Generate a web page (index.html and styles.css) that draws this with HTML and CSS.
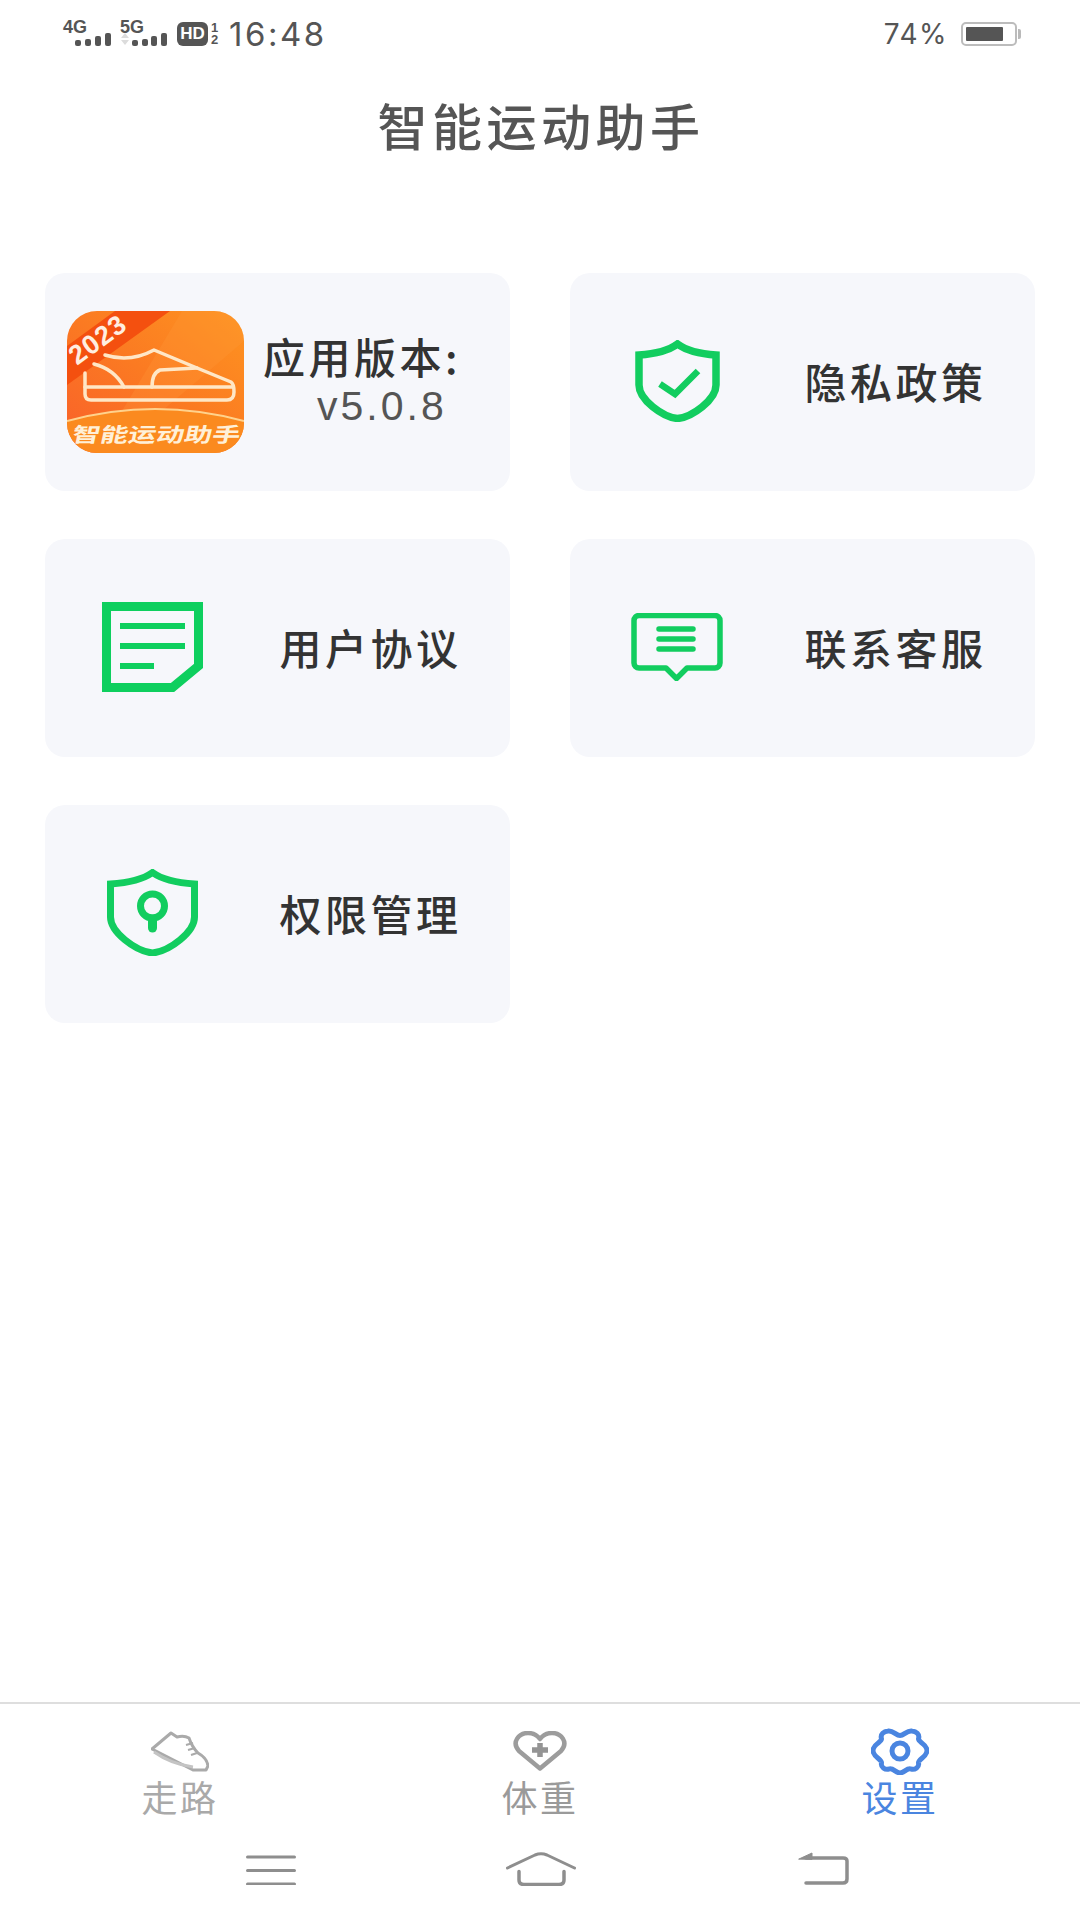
FILE: index.html
```html
<!DOCTYPE html>
<html lang="zh">

<head>
    <meta charset="utf-8">
    <title>智能运动助手</title>
    <link rel="stylesheet" href="styles.css">
</head>

<body>
    <!-- status bar -->
    <div class="status">
        <div class="sig">
            <span class="sig-label">4G</span>
            <svg class="sig-bars sig-bars-4g" width="36" height="14" viewBox="0 0 36 14">
                <rect x="0" y="8" width="6" height="6" rx="2" />
                <rect x="10" y="7" width="6" height="7" rx="2" />
                <rect x="20" y="4" width="6" height="10" rx="2" />
                <rect x="30" y="1" width="6" height="13" rx="2" />
            </svg>
        </div>
        <div class="sig">
            <span class="sig-label">5G</span>
            <svg class="sig-bars" width="47" height="14" viewBox="0 0 47 14">
                <path d="M1 6 L5 1 L9 6Z M1 8 L5 13 L9 8Z" fill="#dcdcdc" />
                <rect x="12" y="8" width="6" height="6" rx="2" />
                <rect x="22" y="7" width="6" height="7" rx="2" />
                <rect x="31" y="4" width="6" height="10" rx="2" />
                <rect x="41" y="1" width="6" height="13" rx="2" />
            </svg>
        </div>
        <span class="hd">HD</span>
        <span class="sim"><span>1</span><span>2</span></span>
        <span class="time">16:48</span>
        <span class="percent">74%</span>
        <div class="battery">
            <div class="battery-fill"></div>
        </div>
        <div class="battery-tip"></div>
    </div>

    <h1 class="title">智能运动助手</h1>

    <div class="cards">
        <div class="card card-app">
            <svg class="app-icon" width="177" height="142" viewBox="0 0 177 142">
                <defs>
                    <linearGradient id="appBg" x1="0" y1="1" x2="1" y2="0">
                        <stop offset="0" stop-color="#f9602a" />
                        <stop offset="0.5" stop-color="#fb7a22" />
                        <stop offset="1" stop-color="#fe9420" />
                    </linearGradient>
                    <clipPath id="appClip">
                        <rect width="177" height="142" rx="30" />
                    </clipPath>
                </defs>
                <g clip-path="url(#appClip)">
                    <rect width="177" height="142" fill="url(#appBg)" />
                    <path d="M115 0 L177 0 L177 30 L95 100 L55 100Z" fill="#ff9a3a" opacity="0.25" />
                    <path d="M0 35 L48 0 L103 0 L0 74Z" fill="#f4500f" />
                    <path d="M0 110 Q88 86 177 110 V142 H0Z" fill="#fb8a1f" />
                    <path d="M0 110 Q88 86 177 110" fill="none" stroke="#ffd28c" stroke-width="2" />
                </g>
                <g fill="none" stroke="#ffe7c6" stroke-width="3.500" stroke-linejoin="round" stroke-linecap="round">
                    <path d="M18 62 V83 Q18 89 24 89 H160 Q167 89 167 81 Q167 73 164 71 L130 57 L87 39 Q63 52 38 44" />
                    <path d="M18 76 H165" />
                    <path d="M27 53 Q47 58 57 76" />
                    <path d="M130 57 Q110 58 93 59 Q85 62 85 76" />
                </g>
                <text class="app-year" transform="translate(36 36) rotate(-36)" text-anchor="middle">2023</text>
                <text class="app-name" transform="translate(88 131) skewX(-12) scale(1 0.72)" text-anchor="middle">智能运动助手</text>
            </svg>
            <div class="app-info">
                <div class="app-label">应用版本:</div>
                <div class="app-version">v5.0.8</div>
            </div>
        </div>

        <div class="card">
            <div class="card-icon">
                <svg width="85" height="82" viewBox="0 0 85 82" fill="none" stroke="#12cd5f" stroke-width="7.500">
                    <path d="M42.500 4 C33 11 20 14 4 15 V45 C4 60 28 77 42.500 78.500 C57 77 81 60 81 45 V15 C65 14 52 11 42.500 4Z" />
                    <path d="M25 44 L40 54 L63 31" stroke-width="6.500" />
                </svg>
            </div>
            <div class="card-text">隐私政策</div>
        </div>

        <div class="card">
            <div class="card-icon">
                <svg width="101" height="90" viewBox="0 0 101 90" fill="none" stroke="#0ecf5e" stroke-width="9">
                    <path d="M4.500 4.500 H96.500 V64 L70.500 85.500 H4.500Z" />
                    <path d="M18 24 H83 M18 44 H83 M18 64 H52" stroke-width="6" />
                </svg>
            </div>
            <div class="card-text">用户协议</div>
        </div>

        <div class="card">
            <div class="card-icon">
                <svg width="92" height="68" viewBox="0 0 92 68" fill="none" stroke="#12cd5f" stroke-width="5.500" stroke-linejoin="round">
                    <path d="M8 2.500 H84 a5 5 0 0 1 5 5 V50 a5 5 0 0 1 -5 5 H56 L45.500 65.500 L35 55 H8 a5 5 0 0 1 -5 -5 V7.500 a5 5 0 0 1 5 -5Z" />
                    <path d="M28 16 H62 M28 26 H62 M28 36 H62" stroke-linecap="round" />
                </svg>
            </div>
            <div class="card-text">联系客服</div>
        </div>

        <div class="card">
            <div class="card-icon">
                <svg width="91" height="87" viewBox="0 0 91 87" fill="none" stroke="#12cd5f" stroke-width="7">
                    <path d="M45.500 3.500 C35 11 20 14 3.500 15 V48 C3.500 63 28 82 45.500 84 C63 82 87.500 63 87.500 48 V15 C71 14 56 11 45.500 3.500Z" />
                    <circle cx="45.500" cy="37" r="12" />
                    <path d="M45.500 50 V59" stroke-width="9" stroke-linecap="round" />
                </svg>
            </div>
            <div class="card-text">权限管理</div>
        </div>
    </div>

    <div class="spacer"></div>

    <!-- bottom tabs -->
    <div class="tabs">
        <div class="tab">
            <div class="tab-icon">
                <svg width="58" height="41" viewBox="0 0 58 41" fill="none" stroke="#aaaaaa" stroke-width="3" stroke-linejoin="round">
                    <path d="M1 18 L20 2 L26 6 Q33 4 38 7 Q41 16 47 22 Q56 27 57 35 L55 39 L42 39Z" />
                    <path d="M3 21 Q20 33 42 36" stroke-width="3" stroke="#c4c4c4" />
                    <path d="M35 14 L42 12 M37 19 L44 17 M40 24 L46 22" stroke-width="2" />
                </svg>
            </div>
            <div class="tab-label">走路</div>
        </div>
        <div class="tab">
            <div class="tab-icon">
                <svg width="54" height="40" viewBox="0 0 54 40" fill="none" stroke="#9c9c9c" stroke-width="4.500" stroke-linejoin="round">
                    <path d="M27 37.500 L6 20 C-2 11 6 2 15 2 C20 2 24 4 27 8 C30 4 34 2 39 2 C48 2 56 11 48 20Z" />
                    <path d="M19 19 H35 M27 12 V26" stroke-width="5.500" stroke="#949494" />
                </svg>
            </div>
            <div class="tab-label tab-label-dark">体重</div>
        </div>
        <div class="tab tab-active">
            <div class="tab-icon">
                <svg width="58" height="47" viewBox="0 0 58 47" fill="none" stroke="#4a85e0" stroke-width="5" stroke-linejoin="round">
                    <path d="M29 7.500 C33 7.500 36 2 41 3 C45 3.500 49 6 47.500 11 C47 14 56 16 56 22.500 C56 29 47 31 47.500 35 C48.500 39 44 42 40 41 C36 39.500 33 45 29 45 C25 45 22 39.500 18 41 C14 42 9.500 39 10.500 35 C11 31 2 29 2 22.500 C2 16 11 14 10.500 11 C9 6 13 3.500 17 3 C22 2 25 7.500 29 7.500Z" />
                    <circle cx="29" cy="23" r="8" />
                </svg>
            </div>
            <div class="tab-label">设置</div>
        </div>
    </div>

    <!-- system navigation -->
    <div class="nav">
        <svg class="nav-menu" width="50" height="30" viewBox="0 0 50 30" stroke="#8e8e8e" stroke-width="3" stroke-linecap="round">
            <path d="M1.500 2 H48.500 M1.500 15.500 H48.500 M1.500 29 H48.500" />
        </svg>
        <svg width="70" height="34" viewBox="0 0 70 34" fill="none" stroke="#8e8e8e" stroke-width="3" stroke-linecap="round" stroke-linejoin="round">
            <path d="M1.500 16 L29 3 Q35 0.500 41 3 L68.500 16" />
            <path d="M13 19.500 V28 Q13 32.500 18 32.500 H53 Q58 32.500 58 28 V19.500" stroke-width="3.500" />
        </svg>
        <svg class="nav-back" width="51" height="33" viewBox="0 0 51 33" fill="none" stroke="#8e8e8e" stroke-width="3.500" stroke-linecap="round" stroke-linejoin="round">
            <path d="M8 31 H45 Q49 31 49 27 V9 Q49 6 45 6 H8" />
            <path d="M1 7 L14 1 V7Z" fill="#8e8e8e" stroke-width="1" />
        </svg>
    </div>
</body>

</html>
```

FILE: styles.css
```css
* {
    margin: 0;
    padding: 0;
    box-sizing: border-box;
}

body {
    width: 1080px;
    height: 1920px;
    display: flex;
    flex-direction: column;
    background: #fff;
    font-family: "Noto Sans CJK SC", "Liberation Sans", sans-serif;
    overflow: hidden;
}

svg {
    display: block;
    flex: none;
}

/* status bar */
.status {
    height: 70px;
    display: flex;
    align-items: center;
    padding-left: 63px;
    padding-bottom: 3px;
    color: #555;
}

.sig {
    width: 57px;
    height: 24px;
    display: flex;
    flex-direction: column;
}

.sig-label {
    font-family: "Liberation Sans", sans-serif;
    font-size: 18px;
    line-height: 11px;
    font-weight: bold;
}

.sig-bars {
    fill: #555;
    margin-top: -1px;
}

.sig-bars-4g {
    margin-left: 12px;
}

.hd {
    width: 31px;
    height: 24px;
    border-radius: 6px;
    background: #555;
    color: #fff;
    font-family: "Liberation Sans", sans-serif;
    font-size: 17px;
    font-weight: bold;
    line-height: 24px;
    text-align: center;
}

.sim {
    width: 10px;
    margin-left: 3px;
    display: flex;
    flex-direction: column;
    font-family: "Liberation Sans", sans-serif;
    font-size: 13px;
    font-weight: bold;
    line-height: 12px;
}

.time {
    margin-left: 8px;
    font-family: Inter, sans-serif;
    font-size: 33px;
    letter-spacing: 2.500px;
    line-height: 36px;
}

.percent {
    margin-left: auto;
    font-family: Inter, sans-serif;
    font-size: 28px;
    letter-spacing: 1.500px;
}

.battery {
    width: 56px;
    height: 24px;
    margin-left: 13px;
    padding: 3px;
    border: 2.5px solid #bcbcbc;
    border-radius: 5px;
}

.battery-fill {
    width: 37px;
    height: 100%;
    background: #555;
    border-radius: 1px;
}

.battery-tip {
    width: 3px;
    height: 10px;
    margin-left: 1px;
    margin-right: 59px;
    background: #b9b9b9;
    border-radius: 0 2px 2px 0;
}

.title {
    height: 120px;
    padding-left: 2px;
    color: #555;
    font-size: 50px;
    font-weight: 500;
    letter-spacing: 4.500px;
    line-height: 108px;
    text-align: center;
}

/* cards */
.cards {
    display: grid;
    grid-template-columns: 465px 465px;
    grid-auto-rows: 218px;
    gap: 48px 60px;
    margin-top: 83px;
    padding: 0 45px;
}

.card {
    display: flex;
    align-items: center;
    background: #f6f7fb;
    border-radius: 20px;
}

.card-icon {
    width: 214px;
    display: flex;
    justify-content: center;
    margin-bottom: 3px;
}

.card-text {
    flex: 1;
    padding-right: 28px;
    padding-bottom: 4px;
    color: #333;
    font-size: 42px;
    font-weight: 500;
    letter-spacing: 3.500px;
    text-align: center;
}

.card-app {
    padding-left: 22px;
}

.app-icon {
    overflow: visible;
}

.app-year {
    fill: #ffeee0;
    font-family: "Liberation Sans", sans-serif;
    font-size: 27px;
    font-weight: bold;
    letter-spacing: 1px;
}

.app-name {
    fill: #fff0d8;
    font-size: 28px;
    font-weight: 700;
}

.app-info {
    margin-left: 19px;
}

.app-label {
    color: #333;
    font-size: 42px;
    font-weight: 500;
    letter-spacing: 3.500px;
    line-height: 48px;
}

.app-version {
    padding-left: 54px;
    color: #555;
    font-family: "Liberation Sans", sans-serif;
    font-size: 41px;
    letter-spacing: 3px;
    line-height: 52px;
}

.spacer {
    flex: 1;
}

/* bottom tabs */
.tabs {
    display: flex;
    height: 123px;
    padding-top: 21px;
    border-top: 2px solid #dedede;
}

.tab {
    width: 360px;
    display: flex;
    flex-direction: column;
    align-items: center;
}

.tab-icon {
    height: 52px;
    display: flex;
    align-items: center;
}

.tab-label {
    margin-top: 1px;
    color: #a9a9a9;
    font-size: 36px;
    letter-spacing: 2.500px;
    line-height: 36px;
}

.tab-label-dark {
    color: #9a9a9a;
}

.tab-active .tab-label {
    color: #4a85e0;
}

.nav {
    height: 95px;
    display: flex;
    align-items: flex-start;
    gap: 210px;
    padding-left: 246px;
    padding-top: 27px;
}

.nav-menu {
    margin-top: 3px;
}

.nav-back {
    margin-left: 12px;
}
```
